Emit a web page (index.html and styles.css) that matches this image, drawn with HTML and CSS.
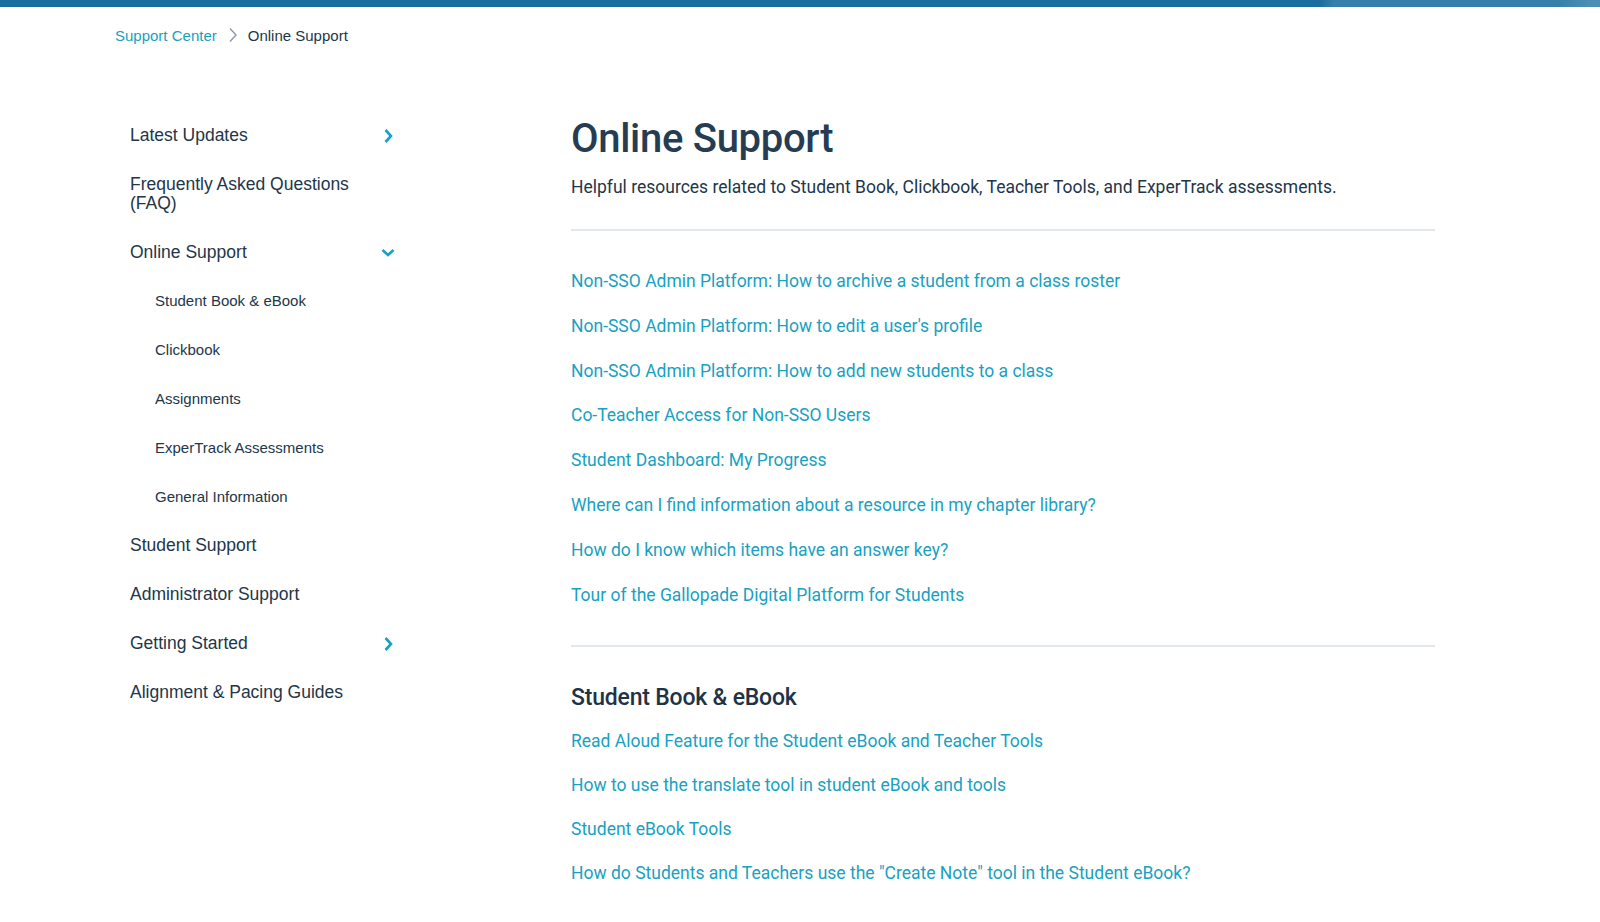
FILE: index.html
```html
<!DOCTYPE html>
<html>
<head>
  <meta charset="UTF-8">
  <title>Online Support</title>
  <link rel="stylesheet" href="styles.css">
</head>
<body>
  <div class="top-bar"><div class="top-bar-shine"></div></div>

  <div class="page">
    <div class="breadcrumb">
      <a href="#">Support Center</a>
      <svg class="crumb-sep" width="10" height="16" viewBox="0 0 10 16"><path d="M2 1.5 L8 8 L2 14.5" fill="none" stroke="#8a98a8" stroke-width="1.4"/></svg>
      <span>Online Support</span>
    </div>

    <div class="layout">
      <nav class="sidebar">
        <div class="nav-item">
          <a href="#">Latest Updates</a>
          <svg class="chev" width="14" height="16" viewBox="0 0 14 16"><path d="M4.5 2 L10 8 L4.5 14" fill="none" stroke="#16a2c2" stroke-width="2.6"/></svg>
        </div>
        <div class="nav-item">
          <a href="#">Frequently Asked Questions (FAQ)</a>
        </div>
        <div class="nav-item">
          <a href="#">Online Support</a>
          <svg class="chev" width="14" height="16" viewBox="0 0 14 16"><path d="M1.5 5 L7 10 L12.5 5" fill="none" stroke="#16a2c2" stroke-width="2.6"/></svg>
        </div>
        <div class="sub-list">
          <a class="sub-item" href="#">Student Book &amp; eBook</a>
          <a class="sub-item" href="#">Clickbook</a>
          <a class="sub-item" href="#">Assignments</a>
          <a class="sub-item" href="#">ExperTrack Assessments</a>
          <a class="sub-item" href="#">General Information</a>
        </div>
        <div class="nav-item">
          <a href="#">Student Support</a>
        </div>
        <div class="nav-item">
          <a href="#">Administrator Support</a>
        </div>
        <div class="nav-item">
          <a href="#">Getting Started</a>
          <svg class="chev" width="14" height="16" viewBox="0 0 14 16"><path d="M4.5 2 L10 8 L4.5 14" fill="none" stroke="#16a2c2" stroke-width="2.6"/></svg>
        </div>
        <div class="nav-item">
          <a href="#">Alignment &amp; Pacing Guides</a>
        </div>
      </nav>

      <main class="content">
        <h1>Online Support</h1>
        <p class="intro">Helpful resources related to Student Book, Clickbook, Teacher Tools, and ExperTrack assessments.</p>

        <ul class="article-list top-list">
          <li><a href="#">Non-SSO Admin Platform: How to archive a student from a class roster</a></li>
          <li><a href="#">Non-SSO Admin Platform: How to edit a user's profile</a></li>
          <li><a href="#">Non-SSO Admin Platform: How to add new students to a class</a></li>
          <li><a href="#">Co-Teacher Access for Non-SSO Users</a></li>
          <li><a href="#">Student Dashboard: My Progress</a></li>
          <li><a href="#">Where can I find information about a resource in my chapter library?</a></li>
          <li><a href="#">How do I know which items have an answer key?</a></li>
          <li><a href="#">Tour of the Gallopade Digital Platform for Students</a></li>
        </ul>

        <section class="section">
          <h2>Student Book &amp; eBook</h2>
          <ul class="article-list">
            <li><a href="#">Read Aloud Feature for the Student eBook and Teacher Tools</a></li>
            <li><a href="#">How to use the translate tool in student eBook and tools</a></li>
            <li><a href="#">Student eBook Tools</a></li>
            <li><a href="#">How do Students and Teachers use the "Create Note" tool in the Student eBook?</a></li>
          </ul>
        </section>
      </main>
    </div>
  </div>
</body>
</html>
```

FILE: styles.css
```css
body {
  margin: 0;
  padding: 0;
  background-color: #ffffff;
  font-family: "Liberation Sans", Arial, sans-serif;
  color: #22364a;
}

a {
  text-decoration: none;
}

.top-bar {
  height: 7px;
  background-color: #1a6e9f;
  position: relative;
  overflow: hidden;
}

.top-bar-shine {
  position: absolute;
  top: 0;
  right: 0;
  width: 280px;
  height: 7px;
  background: linear-gradient(100deg, rgba(255, 255, 255, 0) 0, rgba(255, 255, 255, 0.12) 14px, rgba(255, 255, 255, 0.12) 235px, rgba(255, 255, 255, 0.22) 265px);
}

.page {
  width: 1370px;
  margin: 0 auto;
}

.breadcrumb {
  display: flex;
  align-items: center;
  height: 20px;
  margin-top: 18px;
  font-size: 15px;
}

.breadcrumb a {
  color: #1aa0c1;
}

.breadcrumb span {
  color: #22364a;
}

.crumb-sep {
  margin: 0 10px 0 11px;
}

.layout {
  display: flex;
  align-items: flex-start;
  margin-top: 69px;
}

.sidebar {
  width: 290px;
  padding-left: 15px;
  padding-top: 12px;
  box-sizing: border-box;
}

.nav-item {
  display: flex;
  justify-content: space-between;
  align-items: center;
  padding-right: 10px;
  margin-bottom: 30px;
}

.nav-item a {
  display: block;
  width: 238px;
  font-size: 17.5px;
  line-height: 19px;
  color: #22364a;
}

.sub-list {
  padding-left: 25px;
  margin-bottom: 30px;
}

.sub-item {
  display: block;
  font-size: 15px;
  line-height: 18px;
  color: #22364a;
  margin-bottom: 31px;
}

.sub-item:last-child {
  margin-bottom: 0;
}

.content {
  width: 864px;
  margin-left: 166px;
  font-family: Roboto, "Liberation Sans", sans-serif;
}

.content h1 {
  margin: 0;
  font-size: 40px;
  line-height: 50px;
  font-weight: 500;
  color: #263c52;
  letter-spacing: -0.3px;
}

.intro {
  margin: 11px 0 0 0;
  font-size: 17.5px;
  line-height: 24px;
  color: #22364a;
  padding-bottom: 30px;
  border-bottom: 2px solid #e2e7ec;
}

.article-list {
  list-style: none;
  margin: 0;
  padding: 0;
}

.top-list {
  padding-top: 38px;
  padding-bottom: 38px;
  border-bottom: 2px solid #e2e7ec;
}

.article-list li {
  font-size: 17.5px;
  line-height: 24px;
  margin-bottom: 20.8px;
}

.article-list li:last-child {
  margin-bottom: 0;
}

.article-list a {
  color: #18a1c1;
}

.section {
  padding-top: 37px;
}

.section .article-list li {
  margin-bottom: 20.2px;
}

.section .article-list li:last-child {
  margin-bottom: 0;
}

.section h2 {
  margin: 0 0 17px 0;
  font-size: 23px;
  line-height: 28px;
  font-weight: 500;
  color: #1f3346;
  letter-spacing: -0.2px;
}
```
